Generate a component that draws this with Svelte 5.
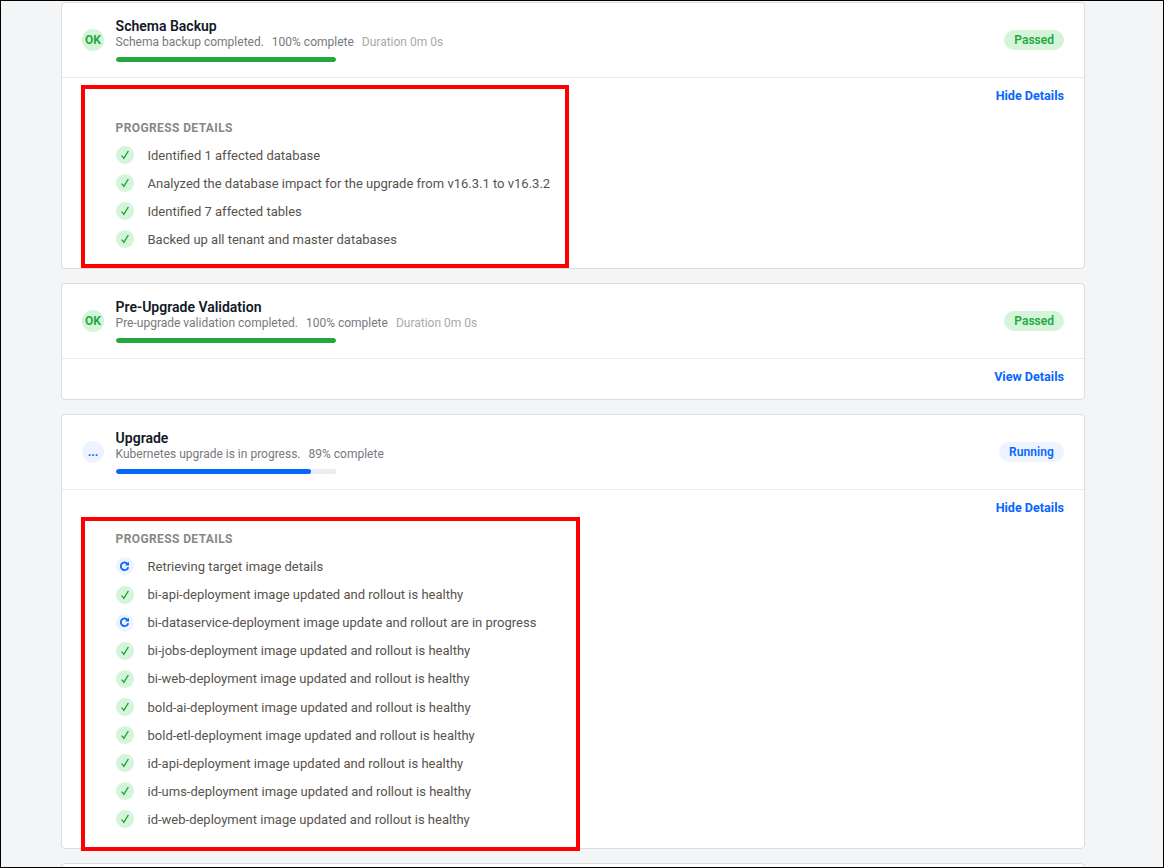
<script>
  const cards = [
    { title: 'Schema Backup', msg: 'Schema backup completed.', pct: 100, bar: 100, dur: 'Duration 0m 0s', state: 'ok', link: 'Hide Details',
      rows: [['ok','Identified 1 affected database'],['ok','Analyzed the database impact for the upgrade from v16.3.1 to v16.3.2'],['ok','Identified 7 affected tables'],['ok','Backed up all tenant and master databases']] },
    { title: 'Pre-Upgrade Validation', msg: 'Pre-upgrade validation completed.', pct: 100, bar: 100, dur: 'Duration 0m 0s', state: 'ok', link: 'View Details', rows: [] },
    { title: 'Upgrade', msg: 'Kubernetes upgrade is in progress.', pct: 89, bar: 88.6, dur: '', state: 'run', link: 'Hide Details',
      rows: [['run','Retrieving target image details'],['ok','bi-api-deployment image updated and rollout is healthy'],['run','bi-dataservice-deployment image update and rollout are in progress'],['ok','bi-jobs-deployment image updated and rollout is healthy'],['ok','bi-web-deployment image updated and rollout is healthy'],['ok','bold-ai-deployment image updated and rollout is healthy'],['ok','bold-etl-deployment image updated and rollout is healthy'],['ok','id-api-deployment image updated and rollout is healthy'],['ok','id-ums-deployment image updated and rollout is healthy'],['ok','id-web-deployment image updated and rollout is healthy']] }
  ];
</script>

<div class="page">
  <div class="list">
    {#each cards as c}
      <section class="card">
        <header class="head">
          <div class="badge {c.state}">{c.state === 'ok' ? 'OK' : '...'}</div>
          <div class="info">
            <div class="title">{c.title}</div>
            <div class="sub">
              <span>{c.msg}</span><span>{c.pct}% complete</span>{#if c.dur}<span class="dur">{c.dur}</span>{/if}
            </div>
            <div class="track"><div class="fill {c.state}" style="width:{c.bar}%"></div></div>
          </div>
          <div class="pill {c.state}">{c.state === 'ok' ? 'Passed' : 'Running'}</div>
        </header>
        <div class="body" class:open={c.rows.length}>
          <div class="linkrow"><span class="link">{c.link}</span></div>
          {#if c.rows.length}
            <div class="details">
              <div class="label">PROGRESS DETAILS</div>
              <ul>
                {#each c.rows as r}
                  <li>
                    <span class="dot {r[0]}">
                      {#if r[0] === 'ok'}
                        <svg width="10" height="10" viewBox="0 0 10 10"><path d="M1.6 5.6 L3.9 8.4 L8.3 1" fill="none" stroke="#1fa53c" stroke-width="1.4"/></svg>
                      {:else}
                        <svg width="11" height="11" viewBox="0 0 11 11"><path d="M8.8 3.2 A3.8 3.8 0 1 0 9.3 6.2" fill="none" stroke="#0866ff" stroke-width="1.8"/><path d="M10 0.8 V4.6 H6.2 Z" fill="#0866ff"/></svg>
                      {/if}
                    </span>
                    <span>{r[1]}</span>
                  </li>
                {/each}
              </ul>
            </div>
          {/if}
        </div>
      </section>
    {/each}
    <section class="card stub"></section>
  </div>
  <div class="mark m1"></div>
  <div class="mark m2"></div>
</div>

<style>
  :global(body) { margin: 0; }
  .page {
    position: relative;
    box-sizing: border-box;
    width: 1164px;
    height: 868px;
    overflow: hidden;
    border: 1px solid #000;
    background: #f4f5f7;
    font-family: Roboto, sans-serif;
  }
  .list { display: flex; flex-direction: column; gap: 14px; width: 1024px; margin: 0 0 0 60px; padding-top: 1.4px; }
  .card { box-sizing: border-box; background: #fff; border: 1px solid #dcdde0; border-radius: 4px; flex: none; }
  .stub { height: 40px; }
  .head { display: flex; align-items: center; height: 75px; box-sizing: border-box; padding: 0 20px; border-bottom: 1px solid #e9eaec; }
  .badge { width: 22px; height: 22px; border-radius: 50%; display: flex; align-items: center; justify-content: center; font-size: 12px; font-weight: 700; flex: none; margin-right: 11.6px; }
  .badge.ok { background: #d4f5d9; color: #22a83f; }
  .badge.run { background: #eef4ff; color: #0866ff; }
  .info { flex: 1; padding-bottom: 1px; }
  .title { font-size: 14px; font-weight: 600; line-height: 18px; color: #111827; }
  .sub { display: flex; gap: 8px; font-size: 12px; line-height: 14px; color: #77797e; }
  .dur { color: #a8aaae; }
  .track { width: 220px; height: 5px; border-radius: 3px; background: #ececee; margin: 8px 0 0 0.4px; overflow: hidden; }
  .fill { height: 100%; border-radius: 3px; }
  .fill.ok { background: #22a83f; }
  .fill.run { background: #0866ff; }
  .pill { height: 20px; line-height: 20px; padding: 0 10px; border-radius: 10px; font-size: 12px; font-weight: 600; }
  .pill.ok { background: #d4f5d9; color: #22a83f; }
  .pill.run { background: #eef4ff; color: #0866ff; letter-spacing: 0.1px; }
  .body { padding: 0 20px; height: 40px; box-sizing: border-box; }
  .body.open { height: auto; padding-bottom: 19.37px; }
  .linkrow { display: flex; justify-content: flex-end; height: 34.8px; align-items: center; }
  .link { font-size: 12.6px; font-weight: 700; color: #0866ff; }
  .details { padding: 7.6px 0 0 33.5px; }
  .label { font-size: 12px; font-weight: 700; letter-spacing: 0.4px; color: #8a8783; line-height: 14px; margin-bottom: 11.24px; }
  ul { list-style: none; margin: 0; padding: 0; display: flex; flex-direction: column; gap: 10px; }
  li { display: flex; align-items: center; gap: 14px; height: 18.12px; font-size: 13px; color: #57534e; }
  .dot { width: 18px; height: 18px; border-radius: 50%; display: flex; align-items: center; justify-content: center; flex: none; }
  .dot.ok { background: #d4f5d9; }
  .dot.run { background: #eef4ff; }
  .mark { position: absolute; box-sizing: border-box; border: 4px solid #ff0000; pointer-events: none; }
  .m1 { left: 80px; top: 84px; width: 488px; height: 183px; }
  .m2 { left: 80px; top: 516px; width: 499px; height: 334px; }
</style>
